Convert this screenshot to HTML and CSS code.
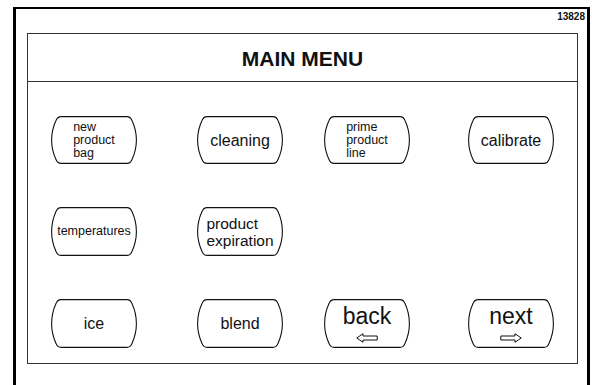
FILE: index.html
```html
<html>
<head>
  <title>Main Menu</title>
  <meta charset="utf-8">
  <link rel="stylesheet" href="styles.css">
</head>
<body>

<!-- button outline, reused by every key -->
<svg class="defs" width="0" height="0">
  <symbol id="key" viewBox="0 0 86 48" preserveAspectRatio="none">
    <path d="M10,0.6 H76 Q79.5,0.6 81,4.5 Q85.4,14 85.4,24 Q85.4,34 81,43.5 Q79.5,47.4 76,47.4 H10 Q6.5,47.4 5,43.5 Q0.6,34 0.6,24 Q0.6,14 5,4.5 Q6.5,0.6 10,0.6 Z"
      fill="#fff" stroke="#111" stroke-width="1.1"/>
  </symbol>
</svg>

<div class="frame">
  <div class="stamp">13828</div>

  <div class="panel">
    <header class="title">MAIN MENU</header>

    <section class="keys">
      <div class="key small"><svg class="shape"><use href="#key"/></svg><span>new<br>product<br>bag</span></div>
      <div class="key"><svg class="shape"><use href="#key"/></svg><span>cleaning</span></div>
      <div class="key small"><svg class="shape"><use href="#key"/></svg><span>prime<br>product<br>line</span></div>
      <div class="key"><svg class="shape"><use href="#key"/></svg><span>calibrate</span></div>

      <div class="key tiny"><svg class="shape"><use href="#key"/></svg><span>temperatures</span></div>
      <div class="key two"><svg class="shape"><use href="#key"/></svg><span>product<br>expiration</span></div>
      <div class="key empty"></div>
      <div class="key empty"></div>

      <div class="key"><svg class="shape"><use href="#key"/></svg><span>ice</span></div>
      <div class="key"><svg class="shape"><use href="#key"/></svg><span>blend</span></div>
      <div class="key nav"><svg class="shape"><use href="#key"/></svg>
        <span>back</span>
        <svg class="arrow" width="22" height="10" viewBox="0 0 22 10"><path d="M0.8,5 L7,0.7 V3 H21.2 V7 H7 V9.3 Z" fill="none" stroke="#111" stroke-width="1"/></svg>
      </div>
      <div class="key nav"><svg class="shape"><use href="#key"/></svg>
        <span>next</span>
        <svg class="arrow" width="22" height="10" viewBox="0 0 22 10"><path d="M21.2,5 L15,0.7 V3 H0.8 V7 H15 V9.3 Z" fill="none" stroke="#111" stroke-width="1"/></svg>
      </div>
    </section>
  </div>
</div>

</body>
</html>
```

FILE: styles.css
```css
* {
  box-sizing: border-box;
}

html, body {
  margin: 0;
  overflow: hidden;
  background: #fff;
}

body {
  font-family: "Liberation Sans", Arial, Helvetica, sans-serif;
  color: #111;
}

.defs {
  position: absolute;
}

/* thick outer frame, no bottom edge on screen */
.frame {
  margin: 7px 0 0 13px;
  width: 577px;
  height: 378px;
  border: 3px solid #000;
  border-top-width: 2px;
  border-bottom: 0;
}

.stamp {
  text-align: right;
  font-size: 10px;
  font-weight: bold;
  line-height: 10px;
  padding: 3px 2px 0 0;
}

.panel {
  margin: 11px 9px 0 11px;
  border: 1px solid #333;
}

.title {
  height: 48px;
  border-bottom: 1px solid #333;
  font-size: 21px;
  font-weight: bold;
  text-align: center;
  line-height: 49px;
}

/* 4 x 3 grid of keys */
.keys {
  display: grid;
  grid-template-columns: 146px 127px 144px 86px;
  grid-template-rows: 48px 49px 49px;
  row-gap: 43px;
  padding: 34px 0 15px 23px;
}

.key {
  position: relative;
  width: 86px;
  display: flex;
  flex-direction: column;
  align-items: center;
  justify-content: center;
  font-size: 16px;
  line-height: 17px;
}

.key .shape {
  position: absolute;
  left: 0;
  top: 0;
  width: 100%;
  height: 100%;
}

.key span {
  position: relative;
  text-align: left;
}

.key.small {
  font-size: 12.5px;
  line-height: 13px;
}

.key.tiny {
  font-size: 12.5px;
}

.key.two {
  font-size: 15.5px;
  line-height: 17px;
}

.key.empty {
  visibility: hidden;
}

.key.nav {
  font-size: 23px;
  line-height: 23px;
}

.arrow {
  position: relative;
  margin-top: 5px;
}
```
